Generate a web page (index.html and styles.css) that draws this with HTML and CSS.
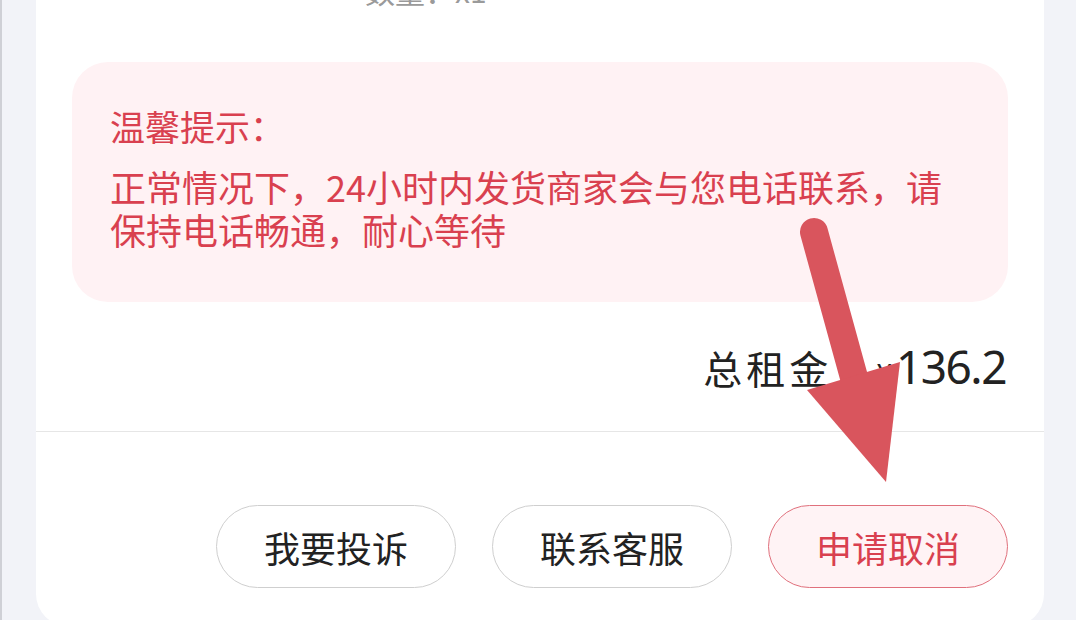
FILE: index.html
```html
<!DOCTYPE html>
<html lang="zh-CN">
<head>
<meta charset="utf-8">
<link rel="stylesheet" href="styles.css">
</head>
<body>
<div class="page">
  <div class="card">
    <div class="qty">数量：x1</div>
    <div class="tip">
      <div class="tip-title">温馨提示：</div>
      <div class="tip-body">正常情况下，24小时内发货商家会与您电话联系，请保持电话畅通，耐心等待</div>
    </div>
    <div class="total">
      <span class="total-label">总租金</span><span class="yen">¥</span><span class="amount">136.2</span>
    </div>
    <div class="actions">
      <button class="btn">我要投诉</button>
      <button class="btn">联系客服</button>
      <button class="btn btn-primary">申请取消</button>
    </div>
  </div>
  <svg class="arrow" viewBox="0 0 1076 620" width="1076" height="620">
    <line x1="812" y1="232" x2="856" y2="392" stroke="#d9555d" stroke-width="28" stroke-linecap="round"/>
    <polygon points="805,390 898,362 884,482" fill="#d9555d"/>
  </svg>
</div>
</body>
</html>
```
FILE: styles.css
```css
* { box-sizing: border-box; }
html, body {
  margin: 0;
  padding: 0;
  background: #f2f3f8;
  font-family: "Noto Sans CJK SC", "Noto Sans", sans-serif;
  overflow: hidden;
}
.page {
  position: relative;
  width: 1076px;
  height: 620px;
  padding: 0 32px 0 34px;
  border-left: 2px solid #cfd0d6;
  overflow: hidden;
}
.card {
  background: #ffffff;
  border-radius: 0 0 32px 32px;
  height: 626px;
  display: flex;
  flex-direction: column;
}
.qty {
  margin-top: -26px;
  height: 32px;
  line-height: 32px;
  font-size: 30px;
  color: #9a9a9a;
  padding-left: 329px;
}
.tip {
  margin: 56px 36px 0 36px;
  background: #fff2f4;
  border-radius: 36px;
  padding: 40px 38px 51px 38px;
  color: #d9404f;
}
.tip-title {
  font-size: 35px;
  line-height: 48px;
}
.tip-body {
  margin-top: 15px;
  font-size: 36px;
  line-height: 43px;
}
.total {
  display: flex;
  justify-content: flex-end;
  align-items: baseline;
  padding: 39px 38px 36px 0;
  height: 130px;
  border-bottom: 1px solid #e6e6e6;
  color: #222222;
}
.total-label {
  font-size: 39px;
  letter-spacing: 4px;
  line-height: 50px;
}
.yen {
  font-size: 28px;
  margin-left: 44px;
  margin-right: 4px;
}
.amount {
  font-size: 46px;
  line-height: 50px;
  letter-spacing: -1.5px;
  font-family: "Noto Sans", sans-serif;
}
.actions {
  display: flex;
  justify-content: flex-end;
  gap: 36px;
  padding: 73px 36px 0 0;
}
.btn {
  width: 240px;
  height: 83px;
  flex: none;
  border-radius: 42px;
  border: 1.5px solid #cfcfcf;
  background: #ffffff;
  font-family: "Noto Sans CJK SC", sans-serif;
  font-size: 36px;
  color: #222222;
  padding: 0;
}
.btn-primary {
  border-color: #e0707c;
  background: #fff3f5;
  color: #d9404f;
}
.arrow {
  position: absolute;
  left: 0;
  top: 0;
  pointer-events: none;
}
```
